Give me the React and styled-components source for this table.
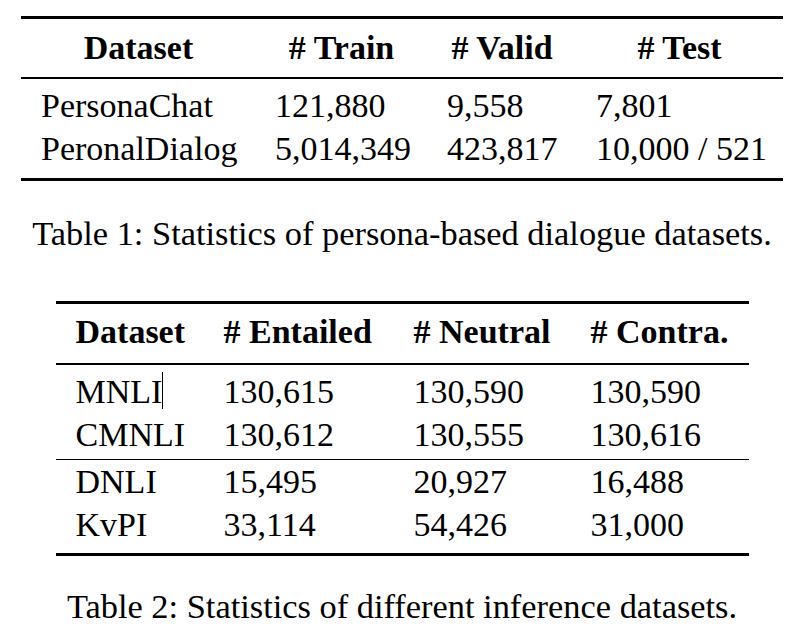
import React from "react";
import styled, { createGlobalStyle } from "styled-components";

const Global = createGlobalStyle`
  html, body { margin: 0; padding: 0; background: #fff; }
  body { font-family: "Liberation Serif", "Times New Roman", serif; color: #000; }
`;

const Page = styled.main`
  display: flex;
  flex-direction: column;
  align-items: center;
  padding: 16px 0 0 6px;
`;

const Table = styled.div`
  width: ${(p) => p.$width}px;
  border-top: 3px solid #000;
  border-bottom: 3px solid #000;
  font-family: "Liberation Serif", "Times New Roman", serif;
  font-size: 34px;
  color: #000;
`;

const Section = styled.div`
  padding: ${(p) => p.$pad};
  border-bottom: ${(p) => (p.$rule ? `${p.$rule}px solid #000` : "none")};
`;

const Row = styled.div`
  display: grid;
  grid-template-columns: ${(p) => p.$cols};
  padding: 0 20px;
  line-height: 43px;
  white-space: nowrap;
`;

const HeadRow = styled(Row)`
  font-weight: bold;
`;

const HeadCell = styled.div`
  text-align: ${(p) => (p.$center ? "center" : "left")};
  padding-right: ${(p) => p.$gap || 0}px;
`;

const Cell = styled.div`
  text-align: left;
`;

const Bar = styled.span`
  display: inline-block;
  width: 1px;
  height: 37px;
  background: #000;
  vertical-align: -6px;
`;

const Caption = styled.p`
  margin: ${(p) => p.$mt}px 0 0;
  width: 100%;
  font-size: 34.4px;
  line-height: 40px;
  text-align: center;
`;

const t1Cols = "234px 172px 149px 1fr";
const t1Head = ["Dataset", "# Train", "# Valid", "# Test"];
const t1Rows = [
  ["PersonaChat", "121,880", "9,558", "7,801"],
  ["PeronalDialog", "5,014,349", "423,817", "10,000 / 521"],
];

const t2Cols = "148px 190px 177px 1fr";
const t2Head = ["Dataset", "# Entailed", "# Neutral", "# Contra."];
const t2GroupA = [
  ["MNLI", "130,615", "130,590", "130,590"],
  ["CMNLI", "130,612", "130,555", "130,616"],
];
const t2GroupB = [
  ["DNLI", "15,495", "20,927", "16,488"],
  ["KvPI", "33,114", "54,426", "31,000"],
];

function BodyRow({ cols, cells, bar }) {
  return (
    <Row $cols={cols}>
      {cells.map((c, i) => (
        <Cell key={i}>
          {c}
          {bar && i === 0 ? <Bar /> : null}
        </Cell>
      ))}
    </Row>
  );
}

export default function App() {
  return (
    <>
      <Global />
      <Page>
        <Table $width={762}>
          <Section $pad="7px 0 8px" $rule={2}>
            <HeadRow $cols={t1Cols}>
              {t1Head.map((h, i) => (
                <HeadCell key={h} $center $gap={i < 3 ? 39 : 0}>
                  {h}
                </HeadCell>
              ))}
            </HeadRow>
          </Section>
          <Section $pad="5px 0 8px">
            {t1Rows.map((r) => (
              <BodyRow key={r[0]} cols={t1Cols} cells={r} />
            ))}
          </Section>
        </Table>
        <Caption $mt={32}>Table 1: Statistics of persona-based dialogue datasets.</Caption>

        <Table $width={693} style={{ marginTop: 48 }}>
          <Section $pad="6px 0 10px" $rule={2}>
            <HeadRow $cols={t2Cols}>
              {t2Head.map((h) => (
                <HeadCell key={h}>{h}</HeadCell>
              ))}
            </HeadRow>
          </Section>
          <Section $pad="5px 0 3px" $rule={1}>
            {t2GroupA.map((r, i) => (
              <BodyRow key={r[0]} cols={t2Cols} cells={r} bar={i === 0} />
            ))}
          </Section>
          <Section $pad="0 0 7px">
            {t2GroupB.map((r) => (
              <BodyRow key={r[0]} cols={t2Cols} cells={r} />
            ))}
          </Section>
        </Table>
        <Caption $mt={30}>Table 2: Statistics of different inference datasets.</Caption>
      </Page>
    </>
  );
}
